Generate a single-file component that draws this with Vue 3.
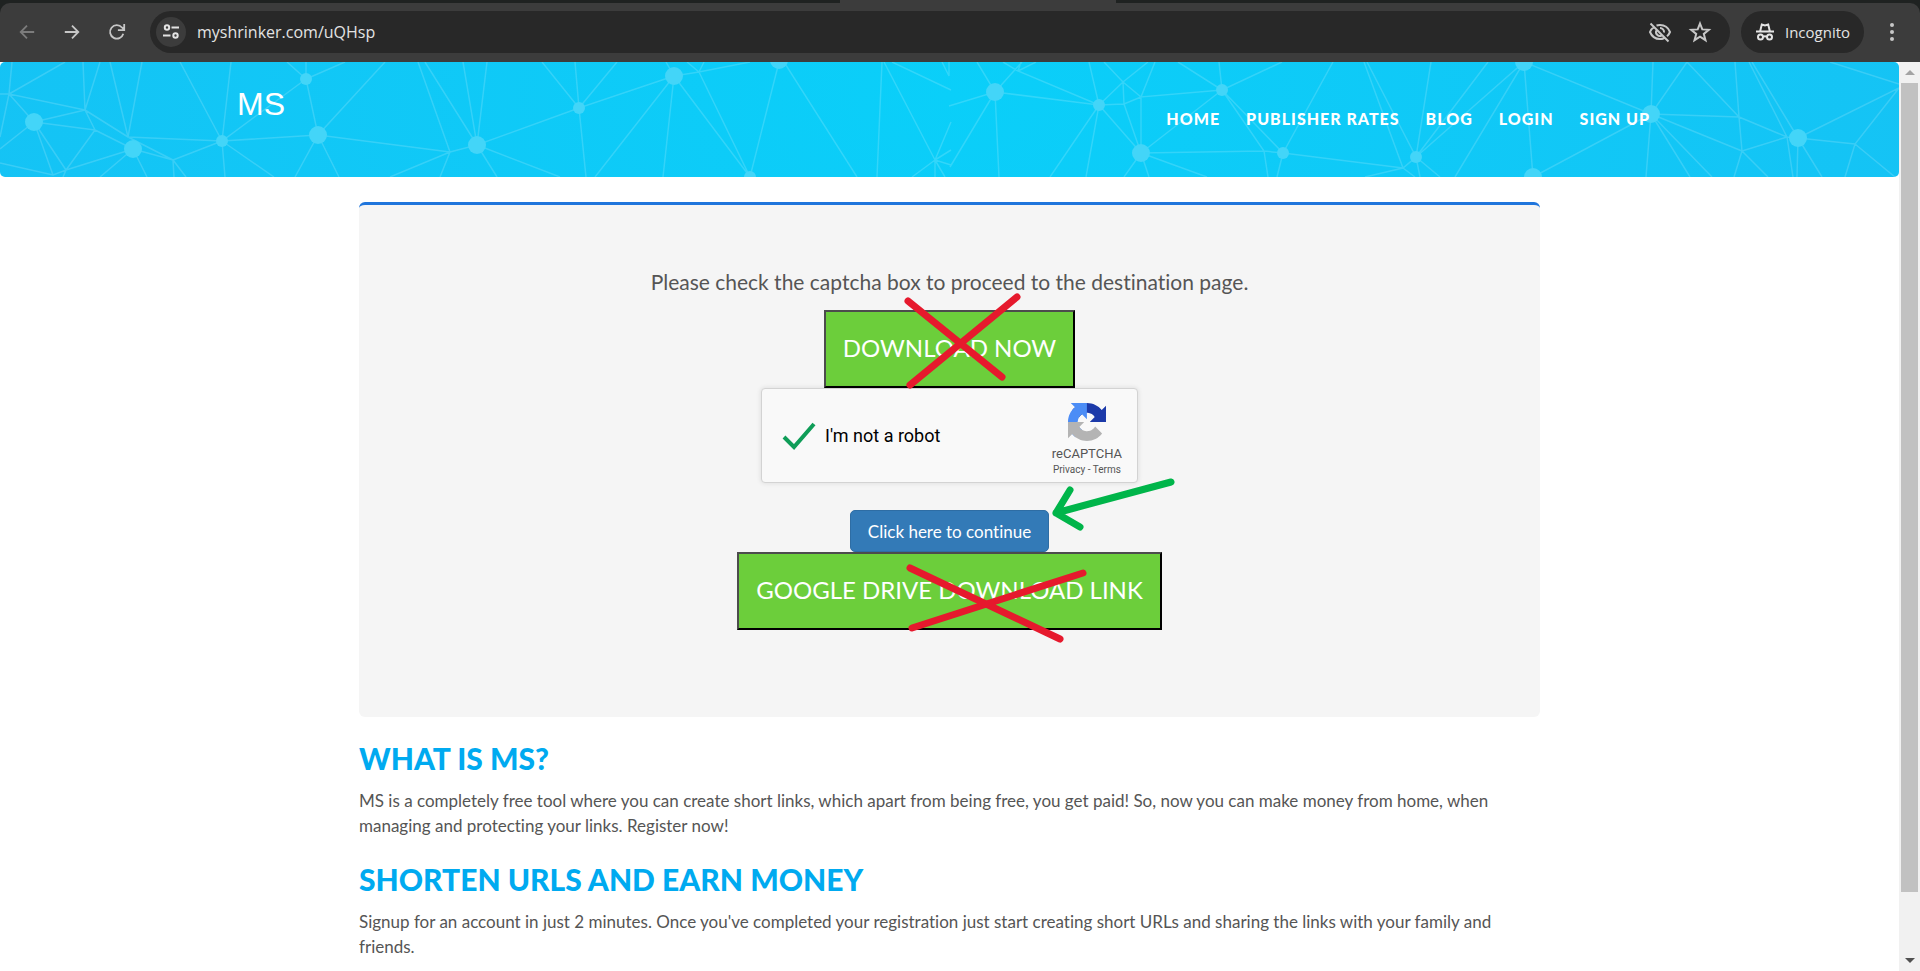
<script setup>
import { ref } from 'vue'

const url = ref('myshrinker.com/uQHsp')
const robotChecked = ref(true)

const navLinks = ['Home', 'Publisher Rates', 'Blog', 'Login', 'Sign up']

const articles = [
  {
    title: 'What is MS?',
    text: 'MS is a completely free tool where you can create short links, which apart from being free, you get paid! So, now you can make money from home, when managing and protecting your links. Register now!'
  },
  {
    title: 'Shorten URLs and earn money',
    text: "Signup for an account in just 2 minutes. Once you've completed your registration just start creating short URLs and sharing the links with your family and friends."
  }
]

// Header mesh: nodes are [x, y, r]
const nodes = [
  [34, 60, 9], [133, 87, 9], [222, 79, 6], [306, 17, 6], [318, 73, 9], [477, 83, 9],
  [579, 46, 6], [674, 14, 9], [779, -2, 9], [750, 115, 6], [995, 30, 9], [1099, 43, 6],
  [1141, 91, 9], [1222, 28, 6], [1283, 91, 6], [1416, 95, 6], [1524, 0, 9], [1651, 52, 9],
  [1533, 115, 9], [1798, 76, 9]
]

const mesh = [
  'M12 0L9 32M0 32H9M65 0L9 32L85 48M9 32L34 60M9 32L0 75M34 60L85 48M34 60L0 87M34 60L53 113M34 60L66 108M34 60L95 68',
  'M83 0L85 48M100 0L85 48L95 68M85 48L128 75M95 68L66 108M95 68L133 87M110 0L128 75M142 0L128 75L222 79M128 75L173 98M133 87L173 98M133 87L66 108M133 87L100 115M133 87L147 115',
  'M0 101L53 113L66 108L63 115M173 98L174 115M173 98L186 115M173 98L222 79M180 0L222 79M231 0L222 79L306 17M222 79L318 73M222 79L225 115M222 79L274 115',
  'M287 0L306 17M306 0V17M345 0L306 17L318 73M385 0L318 73L295 115M318 73L339 115M318 73L450 90M418 0L450 90M425 0L477 83M463 0L477 83L450 90L390 115M450 90L440 115',
  'M487 0L477 83L579 46M477 83L560 115M477 83L497 115M542 0L579 46M575 0L579 46M617 0L579 46L674 14M579 46L586 115M666 0L674 14L699 10M674 14L595 115M674 14L663 115M674 14L750 115',
  'M687 0L699 10M704 0L699 10L750 0M699 10L750 115L779 0M784 0L857 115M882 0L877 115M884 0L935 98M892 0L951 28M942 0L949 14V0M935 98L951 60M935 98L951 88M935 98L951 103M935 98L912 115M935 98V115M935 98L945 115',
  'M977 0L995 30L1022 0M995 30L949 44M995 30L1099 43M995 30L950 105M995 30L999 115M1003 0L1018 9M1021 0L1018 9M1036 0L1018 9L1099 43M1089 0L1099 43L1123 20L1148 0M1104 0L1123 20L1124 42M1123 20L1141 35M1099 43L1124 42L1141 35M1124 42L1141 91',
  'M1155 0L1141 35L1222 28M1141 35V91M1099 43L1141 91M1099 43L1050 115M1099 43L1086 115M1141 91L1222 28M1141 91L1264 89M1141 91L1124 115M1141 91L1149 115M1141 91L1207 115',
  'M1178 0L1222 28M1219 0L1222 28M1282 0L1222 28L1283 91M1222 28L1264 89L1268 115M1264 89L1283 91L1333 0M1283 91L1277 115M1283 91L1403 106M1364 0L1403 106M1367 0L1416 95M1431 0L1416 95L1403 106L1365 115M1403 106L1415 115M1416 95L1420 115M1416 95L1440 115',
  'M1488 0L1416 95M1524 0L1416 95M1524 0L1455 115M1524 0L1533 115M1524 0L1651 52M1653 0L1651 52M1687 0L1651 52L1739 55M1651 52L1742 89M1651 52L1646 115M1651 52L1690 115M1651 52L1712 115M1651 52L1533 115',
  'M1687 0L1739 55M1735 0L1739 55L1742 89M1739 55L1787 75M1749 0L1787 75M1752 0L1798 76M1742 89L1787 75M1742 89L1734 115M1742 89L1768 115M1787 75L1793 115M1798 76L1797 115M1798 76L1822 115M1787 75L1798 76L1855 82M1798 76L1899 26M1830 0L1899 22M1899 26L1855 82L1845 115M1855 82L1895 115'
].join('')
</script>

<template>
  <div class="window">
    <div class="tab-strip"><div class="tab-edge"></div></div>
    <div class="toolbar">
      <button class="tool dim" type="button" aria-label="Back">
        <svg viewBox="0 0 20 20"><path d="M18 10H3M10 3L3 10L10 17" /></svg>
      </button>
      <button class="tool" type="button" aria-label="Forward">
        <svg viewBox="0 0 20 20"><path d="M2 10H17M10 3L17 10L10 17" /></svg>
      </button>
      <button class="tool" type="button" aria-label="Reload">
        <svg viewBox="0 0 20 20"><path d="M17 12A7.500 7.500 0 1 1 15.500 5L17.500 7M18 1V8H11" /></svg>
      </button>
      <div class="omnibox">
        <button class="site-info" type="button" aria-label="View site information">
          <svg viewBox="0 0 18 18"><circle cx="5" cy="4.500" r="2.200" /><path d="M9.500 4.500H17M1 12.500H8.500" /><circle cx="13.500" cy="12.500" r="2.200" /></svg>
        </button>
        <input v-model="url" class="url" type="text" aria-label="Address" spellcheck="false" />
        <button class="box-icon" type="button" aria-label="Third-party cookies blocked">
          <svg viewBox="0 0 24 24"><path d="M2.500 3.500L20.500 21.500M8.500 5.500A11 11 0 0 1 12 5C16.500 5 20.200 7.600 22 12C21.300 13.700 20.300 15.200 19 16.300M16 18.200A11 11 0 0 1 12 19C7.500 19 3.800 16.400 2 12C2.800 9.900 4.200 8.200 6 7M12 8A4 4 0 0 1 16 12.500M8.300 10.500A4 4 0 0 0 13.500 15.700" /></svg>
        </button>
        <button class="box-icon" type="button" aria-label="Bookmark this tab">
          <svg viewBox="0 0 24 24"><path d="M12 3.500L14.300 9.400L20.800 9.800L15.800 13.900L17.500 20.200L12 16.700L6.500 20.200L8.200 13.900L3.200 9.800L9.700 9.400Z" /></svg>
        </button>
      </div>
      <button class="incognito" type="button">
        <svg viewBox="0 0 20 20"><path d="M1 9.500H19M5.200 9L6.800 2.500L10 3.500L13.200 2.500L14.800 9" /><circle cx="5.500" cy="15" r="2.500" /><circle cx="14.500" cy="15" r="2.500" /><path d="M8 14.800Q10 13.600 12 14.800" /></svg>
        <span>Incognito</span>
      </button>
      <button class="menu" type="button" aria-label="Menu"><i></i><i></i><i></i></button>
    </div>

    <div class="viewport">
      <div class="page">
        <header class="site-header">
          <svg class="mesh" viewBox="0 0 1899 115" preserveAspectRatio="xMidYMid slice" aria-hidden="true">
            <path :d="mesh" />
            <circle v-for="(n, i) in nodes" :key="i" :cx="n[0]" :cy="n[1]" :r="n[2]" />
          </svg>
          <div class="header-inner">
            <a class="brand" href="#">MS</a>
            <nav>
              <a v-for="link in navLinks" :key="link" href="#">{{ link }}</a>
            </nav>
          </div>
        </header>

        <main>
          <section class="panel">
            <p class="prompt">Please check the captcha box to proceed to the destination page.</p>
            <button class="ad" type="button">DOWNLOAD NOW</button>
            <div class="captcha">
              <label class="robot">
                <span class="tick">
                  <input v-model="robotChecked" type="checkbox" />
                  <svg v-if="robotChecked" viewBox="0 0 34 28"><path d="M2 15L12 25L32 2" /></svg>
                </span>
                <span>I'm not a robot</span>
              </label>
              <div class="captcha-brand">
                <svg viewBox="0 0 64 64" aria-hidden="true">
                  <path fill="#1c3aa9" d="M64 31.955l-.033-1.370V4.687l-7.160 7.160C50.948 4.674 42.033.093 32.050.093c-10.400 0-19.622 4.960-25.458 12.640l11.736 11.860a15.550 15.550 0 0 1 4.754-5.334c2.050-1.600 4.952-2.906 8.968-2.906.485 0 .860.057 1.135.163 4.976.393 9.288 3.140 11.828 7.124l-8.307 8.307L64 31.953" />
                  <path fill="#4c8df6" d="M31.862.094l-1.370.033H4.594l7.160 7.160C4.580 13.147 0 22.060 0 32.046c0 10.400 4.960 19.622 12.640 25.458L24.500 45.768a15.550 15.550 0 0 1-5.334-4.754c-1.600-2.050-2.906-4.952-2.906-8.968 0-.485.057-.860.163-1.135.393-4.976 3.140-9.288 7.124-11.828l8.307 8.307L31.860.095" />
                  <path fill="#b4b4b4" d="M.001 32.045l.033 1.370v25.898l7.160-7.160c5.860 7.173 14.774 11.754 24.760 11.754 10.400 0 19.622-4.960 25.458-12.640l-11.736-11.860a15.550 15.550 0 0 1-4.754 5.334c-2.050 1.600-4.952 2.906-8.968 2.906-.485 0-.860-.057-1.135-.163-4.976-.393-9.288-3.140-11.828-7.124l8.307-8.307L0 32.047" />
                </svg>
                <div class="captcha-name">reCAPTCHA</div>
                <div class="captcha-links"><a href="#">Privacy</a> - <a href="#">Terms</a></div>
              </div>
            </div>
            <button class="continue" type="button">Click here to continue</button>
            <button class="ad" type="button">GOOGLE DRIVE DOWNLOAD LINK</button>
            <svg class="marks" viewBox="0 0 1181 515" preserveAspectRatio="xMidYMin meet" aria-hidden="true">
              <path class="cross" d="M549 99L643 175M658 95L551 183M551 366L701 437M724 371L553 426" />
              <path class="arrow" d="M812 280L697 311M711 288L697 311L721 325" />
            </svg>
          </section>

          <article v-for="a in articles" :key="a.title">
            <h2>{{ a.title }}</h2>
            <p>{{ a.text }}</p>
          </article>
        </main>
      </div>
      <div class="scrollbar" aria-hidden="true">
        <div class="cap"><i class="up"></i></div>
        <div class="thumb"></div>
        <div class="rest"></div>
        <div class="cap"><i class="down"></i></div>
      </div>
    </div>
  </div>
</template>

<style>
body {
  margin: 0;
}
</style>

<style scoped>
* {
  box-sizing: border-box;
}
.window {
  display: flex;
  flex-direction: column;
  height: 100vh;
  overflow: hidden;
  background: #1f2221;
  font-family: Lato, "Liberation Sans", sans-serif;
  font-variant-ligatures: none;
}
a {
  color: inherit;
  text-decoration: none;
}
button {
  font-family: inherit;
  font-variant-ligatures: inherit;
  cursor: pointer;
}
svg {
  display: block;
}

/* Browser chrome */
.tab-strip {
  flex: none;
  height: 3px;
  display: flex;
  justify-content: center;
  padding-left: 36px;
}
.tab-edge {
  width: 276px;
  background: #3c3c3c;
}
.toolbar {
  flex: none;
  display: flex;
  align-items: center;
  height: 59px;
  padding: 0 18px 1px 9px;
  background: #3c3c3c;
  border-radius: 10px 10px 0 0;
}
.toolbar button {
  border: 0;
  padding: 0;
  background: none;
  color: #c7c7c7;
}
.toolbar svg {
  fill: none;
  stroke: currentColor;
  stroke-width: 2;
}
.toolbar .tool {
  width: 36px;
  margin-right: 9px;
}
.tool svg {
  width: 18px;
  height: 18px;
  margin: 0 auto;
}
.toolbar .dim {
  color: #7c7c7c;
}
.omnibox {
  flex: 1;
  display: flex;
  align-items: center;
  height: 42px;
  margin: 0 11px 0 6px;
  padding: 0 18px 0 6px;
  border-radius: 21px;
  background: #282828;
}
.toolbar .site-info {
  display: grid;
  place-items: center;
  width: 30px;
  height: 30px;
  border-radius: 50%;
  background: #3c3c3c;
  color: #e3e3e3;
}
.site-info svg {
  width: 18px;
  height: 18px;
}
.url {
  flex: 1;
  min-width: 0;
  margin-left: 11px;
  padding: 0;
  border: 0;
  outline: 0;
  background: none;
  color: #e3e3e3;
  font: 16px "Open Sans", "Noto Sans", sans-serif;
}
.toolbar .box-icon {
  width: 24px;
  margin-left: 16px;
}
.box-icon svg {
  width: 24px;
  height: 24px;
}
.toolbar .incognito {
  display: flex;
  align-items: center;
  justify-content: center;
  gap: 10px;
  width: 123px;
  height: 42px;
  margin-right: 18px;
  border-radius: 21px;
  background: #282828;
  color: #e3e3e3;
  font: 15px "Open Sans", "Noto Sans", sans-serif;
}
.incognito svg {
  width: 20px;
  height: 20px;
}
.toolbar .menu {
  display: flex;
  flex-direction: column;
  align-items: center;
  gap: 3px;
  width: 20px;
}
.menu i {
  width: 4px;
  height: 4px;
  border-radius: 50%;
  background: #c7c7c7;
}

/* Web page */
.viewport {
  flex: 1;
  min-height: 0;
  display: flex;
  background: #fff;
}
.page {
  flex: 1;
  min-width: 0;
  overflow: hidden;
}
.site-header {
  position: relative;
  height: 115px;
  overflow: hidden;
  border-radius: 5px;
  background: radial-gradient(ellipse 60% 600% at 50% 30%, #0acff9, #17c1f4);
}
.mesh {
  position: absolute;
  inset: 0;
  width: 100%;
  height: 100%;
}
.mesh path {
  fill: none;
  stroke: #fff;
  stroke-opacity: 0.16;
  stroke-width: 1.500;
}
.mesh circle {
  fill: #43d5f8;
}
.header-inner {
  position: relative;
  display: flex;
  justify-content: space-between;
  max-width: 1425px;
  margin: 0 auto;
  padding: 23px 12px 0 0;
  color: #fff;
}
.brand {
  font: 32px/38px "Liberation Sans", Arial, sans-serif;
}
nav {
  display: flex;
  gap: 26px;
  padding-top: 24px;
  font-size: 16px;
  font-weight: 900;
  line-height: 20px;
  letter-spacing: 1px;
  text-transform: uppercase;
}
main {
  max-width: 1181px;
  margin: 25px auto 0;
  color: #555;
}
.panel {
  position: relative;
  display: flex;
  flex-direction: column;
  align-items: center;
  padding: 62px 0 87px;
  border-top: 3px solid #1f75dc;
  border-radius: 6px;
  background: #f5f5f5;
}
.prompt {
  margin: 0 0 13px;
  font-size: 21px;
  line-height: 30px;
}
.ad {
  height: 78px;
  padding: 0 17px 3px;
  border: 2px solid;
  border-color: #4c4c4c #000 #000 #4c4c4c;
  background: #6cce3b;
  color: #fff;
  font-size: 24px;
}
.captcha {
  display: flex;
  align-items: center;
  justify-content: space-between;
  width: 377px;
  height: 95px;
  padding: 0 15px 0 20px;
  border: 1px solid #d3d3d3;
  border-radius: 4px;
  background: #f9f9f9;
  box-shadow: 0 0 4px 1px rgba(0, 0, 0, 0.08);
  color: #000;
  font-family: Roboto, sans-serif;
}
.robot {
  display: flex;
  align-items: center;
  gap: 9px;
  font-size: 18px;
}
.tick {
  display: grid;
  width: 34px;
  height: 28px;
}
.tick > * {
  grid-area: 1 / 1;
}
.tick input {
  appearance: none;
  width: 34px;
  height: 28px;
  margin: 0;
}
.tick path {
  fill: none;
  stroke: #0f9d58;
  stroke-width: 4;
}
.captcha-brand {
  display: flex;
  flex-direction: column;
  align-items: center;
  padding-top: 9px;
  color: #555;
}
.captcha-brand svg {
  width: 38px;
  height: 38px;
}
.captcha-name {
  margin-top: 5px;
  font-size: 13px;
  line-height: 16px;
}
.captcha-links {
  font-size: 10px;
  line-height: 15px;
}
.continue {
  height: 42px;
  margin-top: 27px;
  padding: 0 17px;
  border: 1px solid #2e6da4;
  border-radius: 5px;
  background: #337ab7;
  color: #fff;
  font-size: 17px;
}
.marks {
  position: absolute;
  top: 0;
  left: 0;
  width: 100%;
  margin-top: -3px;
  pointer-events: none;
}
.marks path {
  fill: none;
  stroke-width: 7;
  stroke-linecap: round;
  stroke-linejoin: round;
}
.marks .cross {
  stroke: #e6192d;
}
.marks .arrow {
  stroke: #00b54a;
}
h2 {
  margin: 23px 0 12px;
  color: #00aaf0;
  font-size: 30px;
  font-weight: 900;
  line-height: 36px;
  text-transform: uppercase;
}
article p {
  margin: 0;
  font-size: 17px;
  line-height: 25px;
}

/* Scrollbar */
.scrollbar {
  flex: none;
  display: flex;
  flex-direction: column;
  width: 21px;
  background: #f1f1f1;
}
.cap {
  display: grid;
  place-items: center;
  height: 21px;
}
.up,
.down {
  border: 5px solid transparent;
}
.up {
  border-top: 0;
  border-bottom-color: #a3a3a3;
}
.down {
  border-bottom: 0;
  border-top-color: #505050;
}
.thumb {
  flex: 809;
  margin: 0 2px;
  background: #c1c1c1;
}
.rest {
  flex: 58;
}
</style>
